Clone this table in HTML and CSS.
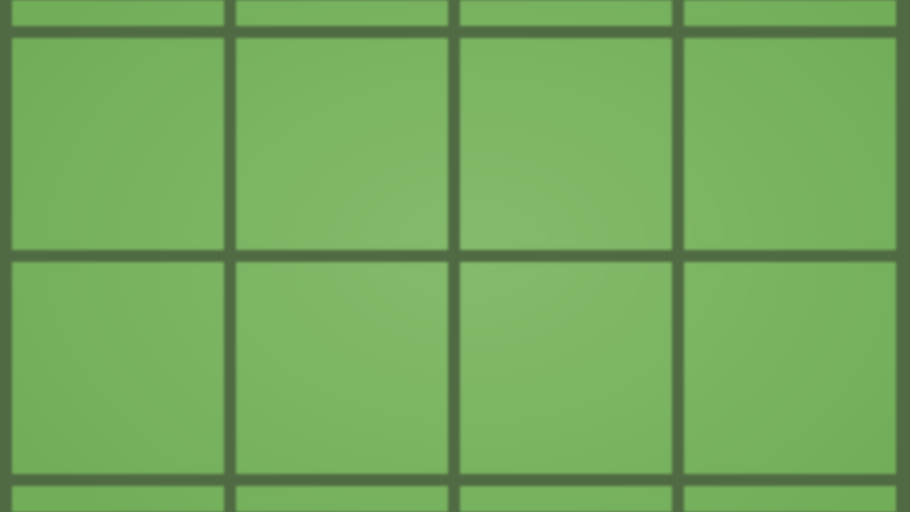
FILE: index.html
```html
<!DOCTYPE html>
<html>
<head>
<meta charset="utf-8">
<link rel="stylesheet" href="styles.css">
</head>
<body>
<div class="board">
  <div class="grid">
    <div class="cell"></div><div class="cell"></div><div class="cell"></div><div class="cell"></div>
    <div class="cell"></div><div class="cell"></div><div class="cell"></div><div class="cell"></div>
    <div class="cell"></div><div class="cell"></div><div class="cell"></div><div class="cell"></div>
    <div class="cell"></div><div class="cell"></div><div class="cell"></div><div class="cell"></div>
  </div>
</div>
</body>
</html>
```
FILE: styles.css
```css
html, body {
  margin: 0;
  padding: 0;
  width: 910px;
  height: 512px;
  overflow: hidden;
  background: #506a44;
}
.board {
  width: 910px;
  height: 512px;
  overflow: hidden;
  background: #506a44;
}
.grid {
  display: grid;
  grid-template-columns: repeat(4, 212px);
  grid-template-rows: repeat(4, 212px);
  gap: 12px;
  padding-left: 12px;
  margin-top: -186px;
  filter: blur(1.8px);
}
.cell {
  background: radial-gradient(ellipse 520px 360px at 470px 250px, #85ba6c 0%, #7cb564 45%, #72ae59 100%);
  background-attachment: fixed;
}
```
